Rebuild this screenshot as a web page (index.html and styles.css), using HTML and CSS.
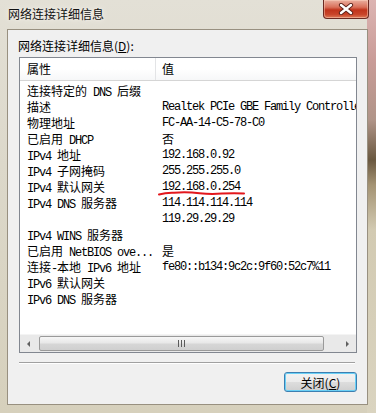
FILE: index.html
```html
<!DOCTYPE html>
<html lang="zh-CN">
    <head>
        <title>网络连接详细信息</title>
        <meta charset="UTF-8" />
        <link rel="stylesheet" href="styles.css">
    </head>
    <body>
        <div class="window">
            <div class="titlebar">
                <span class="title">网络连接详细信息</span>
                <button class="close-btn" aria-label="关闭">
                    <svg width="16" height="12" viewBox="0 0 16 12">
                        <path d="M3 2 L13 10 M13 2 L3 10" stroke="#5a2018" stroke-width="4.2" stroke-linecap="round" />
                        <path d="M3 2 L13 10 M13 2 L3 10" stroke="#ffffff" stroke-width="2.4" stroke-linecap="round" />
                    </svg>
                </button>
            </div>
            <div class="client">
                <div class="caption">网络连接详细信息(<u>D</u>):</div>
                <div class="listview">
                    <div class="lv-header">
                        <div class="lv-col">属性</div>
                        <div class="lv-col">值</div>
                    </div>
                    <div class="lv-body">
                        <div class="lv-row"><div class="k">连接特定的<span class="m"> DNS </span>后缀</div><div class="v"></div></div>
                        <div class="lv-row"><div class="k">描述</div><div class="v">Realtek PCIe GBE Family Controller</div></div>
                        <div class="lv-row"><div class="k">物理地址</div><div class="v">FC-AA-14-C5-78-C0</div></div>
                        <div class="lv-row"><div class="k">已启用<span class="m"> DHCP</span></div><div class="v"><span class="cn">否</span></div></div>
                        <div class="lv-row"><div class="k"><span class="m">IPv4 </span>地址</div><div class="v">192.168.0.92</div></div>
                        <div class="lv-row"><div class="k"><span class="m">IPv4 </span>子网掩码</div><div class="v">255.255.255.0</div></div>
                        <div class="lv-row"><div class="k"><span class="m">IPv4 </span>默认网关</div><div class="v marked">192.168.0.254<svg class="scribble" width="90" height="8" viewBox="0 0 90 8"><path d="M1 5.5 Q8 3.5 16 3.8 Q25 3 34 3.6 Q42 4.6 48 4.8 Q56 5.2 64 4.6 Q74 3.8 86 4.4" fill="none" stroke="#e3171c" stroke-width="2" stroke-linecap="round" /></svg></div></div>
                        <div class="lv-row"><div class="k"><span class="m">IPv4 DNS </span>服务器</div><div class="v">114.114.114.114</div></div>
                        <div class="lv-row"><div class="k"></div><div class="v">119.29.29.29</div></div>
                        <div class="lv-row"><div class="k"><span class="m">IPv4 WINS </span>服务器</div><div class="v"></div></div>
                        <div class="lv-row"><div class="k">已启用<span class="m"> NetBIOS ove...</span></div><div class="v"><span class="cn">是</span></div></div>
                        <div class="lv-row"><div class="k">连接<span class="m">-</span>本地<span class="m"> IPv6 </span>地址</div><div class="v">fe80::b134:9c2c:9f60:52c7%11</div></div>
                        <div class="lv-row"><div class="k"><span class="m">IPv6 </span>默认网关</div><div class="v"></div></div>
                        <div class="lv-row"><div class="k"><span class="m">IPv6 DNS </span>服务器</div><div class="v"></div></div>
                    </div>
                    <div class="hscroll">
                        <div class="sb-arrow"><span class="tri-left"></span></div>
                        <div class="sb-track">
                            <div class="sb-thumb"><span class="grip"></span></div>
                        </div>
                        <div class="sb-arrow"><span class="tri-right"></span></div>
                    </div>
                </div>
                <div class="sep"></div>
                <div class="actions">
                    <button class="btn">关闭(<u>C</u>)</button>
                </div>
            </div>
        </div>
    </body>
</html>
```

FILE: styles.css
```css
body {
    margin: 0;
    padding: 0;
    width: 376px;
    height: 413px;
    overflow: hidden;
    font: 12px "Noto Sans CJK SC", sans-serif;
    color: #000;
}
.window {
    height: 413px;
    box-sizing: border-box;
    display: flex;
    flex-direction: column;
    padding: 0 8px 8px 7px;
    background:
        linear-gradient(to bottom, #dcb4b2 0, #c99c98 60px, #b09488 120px, #6a5840 160px, #a49373 185px, #d2cab2 230px, #dad4c0 100%) right top / 9px 100% no-repeat,
        linear-gradient(to bottom, #e3e0d6 0, #dcd8ca 40%, #d6d0bc 100%);
}
.titlebar {
    height: 29px;
    flex: none;
    display: flex;
    align-items: flex-start;
    justify-content: space-between;
}
.title {
    margin-left: 1px;
    line-height: 28px;
    color: #111;
    text-shadow: 0 0 6px #f4f2ec, 0 0 3px #f4f2ec;
}
.close-btn {
    width: 46px;
    height: 19px;
    margin-right: -1px;
    padding: 0;
    border: 1px solid #6b2a22;
    border-top: 0;
    border-radius: 0 0 4px 4px;
    background: linear-gradient(to bottom, #eab0a0 0, #d9705a 40%, #c0341c 55%, #c9452a 80%, #dd7a58 100%);
    box-shadow: inset 0 0 0 1px rgba(255, 220, 200, 0.45);
    display: flex;
    align-items: center;
    justify-content: center;
}
.client {
    flex: 1;
    background: #f0f0f0;
    border: 1px solid #989080;
    display: flex;
    flex-direction: column;
    padding: 9px 10px 0 11px;
}
.caption {
    margin-left: -1px;
    line-height: 14px;
    height: 14px;
    margin-bottom: 4px;
}
.listview {
    height: 296px;
    box-sizing: border-box;
    border: 1px solid #828790;
    background: #fff;
    display: flex;
    flex-direction: column;
    overflow: hidden;
}
.lv-header {
    height: 22px;
    flex: none;
    display: grid;
    grid-template-columns: 135px 1fr;
    border-bottom: 1px solid #d5d5d5;
    background: linear-gradient(to bottom, #ffffff 0, #ffffff 50%, #f6f7f8 100%);
}
.lv-col {
    line-height: 22px;
    padding-left: 7px;
}
.lv-col + .lv-col {
    border-left: 1px solid #e3e4e6;
    padding-left: 6px;
}
.lv-body {
    flex: 1;
    padding-top: 2px;
}
.lv-row {
    display: grid;
    grid-template-columns: 135px 1fr;
    height: 16px;
    line-height: 16px;
    white-space: nowrap;
}
.k {
    padding-left: 7px;
    overflow: hidden;
}
.v {
    padding-left: 7px;
    font-family: "Liberation Mono", monospace;
    font-size: 12px;
    letter-spacing: -1.2px;
}
.m {
    font-family: "Liberation Mono", monospace;
    font-size: 12px;
    letter-spacing: -1.2px;
}
.cn {
    font-family: "Noto Sans CJK SC", sans-serif;
    font-size: 12px;
    letter-spacing: 0;
}
.marked {
    position: relative;
}
.scribble {
    position: absolute;
    left: 3px;
    top: 10px;
}
.hscroll {
    height: 17px;
    flex: none;
    display: flex;
    background: #e9e9e9;
    border-top: 1px solid #f4f4f4;
}
.sb-arrow {
    width: 17px;
    display: flex;
    align-items: center;
    justify-content: center;
}
.tri-left {
    border-style: solid;
    border-width: 3px 3px 3px 0;
    border-color: transparent #606060 transparent transparent;
}
.tri-right {
    border-style: solid;
    border-width: 3px 0 3px 3px;
    border-color: transparent transparent transparent #606060;
}
.sb-track {
    flex: 1;
    display: flex;
    padding: 1px 15px 1px 2px;
}
.sb-thumb {
    flex: 1;
    border: 1px solid #9a9a9a;
    border-radius: 2px;
    background: linear-gradient(to bottom, #f6f6f6 0, #e8e8e8 45%, #d6d6d6 55%, #cfcfcf 100%);
    display: flex;
    align-items: center;
    justify-content: center;
}
.grip {
    width: 7px;
    height: 7px;
    background: repeating-linear-gradient(to right, #5a5a5a 0 1px, transparent 1px 3px);
}
.sep {
    margin-top: 9px;
    margin-right: 2px;
    height: 1px;
    background: #a0a0a0;
    border-bottom: 1px solid #ffffff;
}
.actions {
    display: flex;
    justify-content: flex-end;
    margin-top: 8px;
}
.btn {
    width: 73px;
    height: 20px;
    padding: 0;
    font: 12px "Noto Sans CJK SC", sans-serif;
    color: #000;
    border: 1px solid #3c7fb1;
    border-radius: 3px;
    background: linear-gradient(to bottom, #f2f2f2 0, #ebebeb 50%, #dddddd 51%, #cfcfcf 100%);
    box-shadow: inset 0 0 0 1px #6ad0f6;
}
```
